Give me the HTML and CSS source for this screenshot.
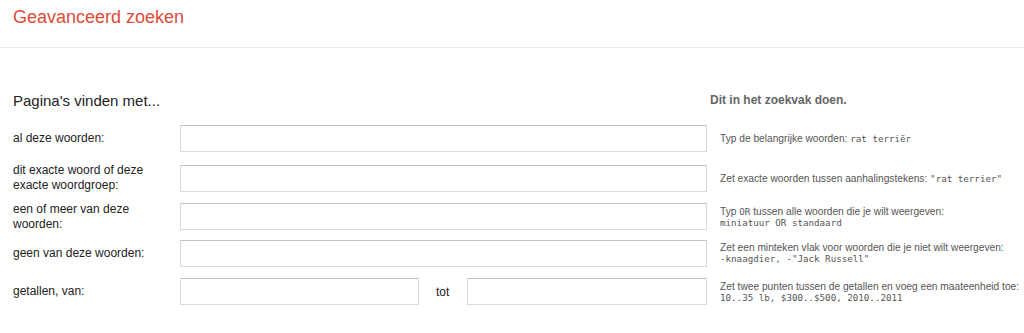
FILE: index.html
```html
<!DOCTYPE html>
<html lang="nl">
  <head>
    <meta charset="utf-8" />
    <title>Geavanceerd zoeken</title>
    <link rel="stylesheet" href="styles.css">
  </head>
  <body>
    <header class="topbar">
      <h1 class="title">Geavanceerd zoeken</h1>
    </header>
    <main class="form">
      <div class="row heading">
        <h2 class="section-title">Pagina's vinden met...</h2>
        <span></span>
        <h3 class="hint-title">Dit in het zoekvak doen.</h3>
      </div>
      <div class="row">
        <label class="label">al deze woorden:</label>
        <input class="field" type="text" />
        <div class="hint">Typ de belangrijke woorden: <code>rat terriër</code></div>
      </div>
      <div class="row">
        <label class="label">dit exacte woord of deze exacte woordgroep:</label>
        <input class="field" type="text" />
        <div class="hint">Zet exacte woorden tussen aanhalingstekens: <code>"rat terrier"</code></div>
      </div>
      <div class="row">
        <label class="label">een of meer van deze woorden:</label>
        <input class="field" type="text" />
        <div class="hint">Typ <code>OR</code> tussen alle woorden die je wilt weergeven:<br><code>miniatuur OR standaard</code></div>
      </div>
      <div class="row">
        <label class="label">geen van deze woorden:</label>
        <input class="field" type="text" />
        <div class="hint">Zet een minteken vlak voor woorden die je niet wilt weergeven:<br><code>-knaagdier, -"Jack Russell"</code></div>
      </div>
      <div class="row">
        <label class="label">getallen, van:</label>
        <div class="range">
          <input class="field" type="text" />
          <span class="tot">tot</span>
          <input class="field" type="text" />
        </div>
        <div class="hint">Zet twee punten tussen de getallen en voeg een maateenheid toe:<br><code>10..35 lb, $300..$500, 2010..2011</code></div>
      </div>
    </main>
  </body>
</html>
```

FILE: styles.css
```css
body {
  margin: 0;
  background-color: #fff;
  font-family: "Liberation Sans", Arial, sans-serif;
  color: #222;
}

.topbar {
  height: 48px;
  border-bottom: 1px solid #ebebeb;
  padding: 0 13px;
  box-sizing: border-box;
}

.title {
  margin: 0;
  padding-top: 5px;
  font-size: 18px;
  font-weight: normal;
  color: #dd4b39;
  line-height: 24px;
}

.form {
  padding: 0 0 0 13px;
}

.row {
  display: grid;
  grid-template-columns: 167px 527px 1fr;
  align-items: center;
  height: 27px;
  margin-bottom: 11.25px;
}

.heading {
  margin-top: 40px;
  margin-bottom: 13px;
  height: 24px;
}

.section-title {
  margin: 0;
  font-size: 15px;
  font-weight: normal;
  color: #222;
  white-space: nowrap;
}

.hint-title {
  margin: 0;
  font-size: 12px;
  font-weight: bold;
  color: #666;
  padding-left: 3px;
}

.label {
  font-size: 12px;
  line-height: 15px;
  padding-right: 20px;
}

.field {
  box-sizing: border-box;
  height: 27px;
  margin: 0;
  border: 1px solid #d9d9d9;
  border-top-color: #c0c0c0;
  border-radius: 1px;
  width: 100%;
  font: 13px "Liberation Sans", Arial, sans-serif;
}

.range {
  display: grid;
  grid-template-columns: 239px 1fr 240px;
  align-items: center;
}

.tot {
  font-size: 12px;
  padding-left: 17px;
}

.hint {
  font-size: 10.2px;
  line-height: 11px;
  color: #555;
  padding-left: 13px;
  white-space: nowrap;
}

code {
  font-family: "DejaVu Sans Mono", monospace;
  font-size: 9.2px;
}
```
